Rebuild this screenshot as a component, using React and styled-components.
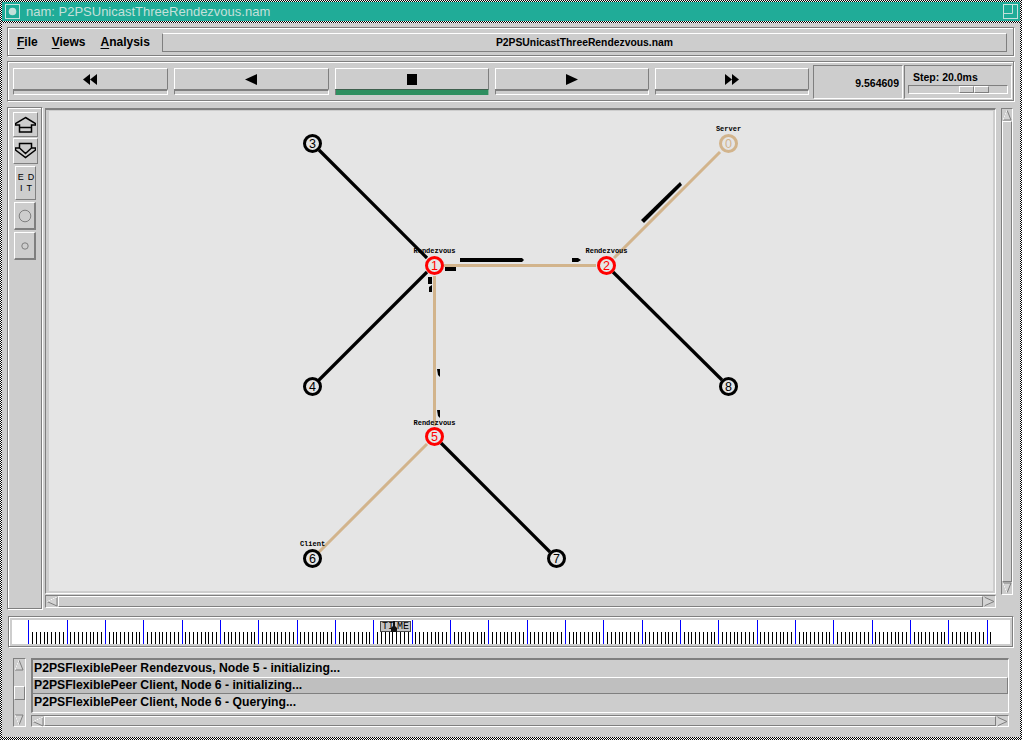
import React from "react";
import styled, { createGlobalStyle, css } from "styled-components";

const Global = createGlobalStyle`
  html, body { margin: 0; padding: 0; background: #cdcdcd; }
  #root { width: 1022px; height: 740px; overflow: hidden; }
`;

const GREY = "#7f7f7f";
const FACE = "#cdcdcd";

const etched = css`
  border: 1px solid ${GREY};
  border-right-color: #ffffff;
  border-bottom-color: #ffffff;
  box-shadow: inset -1px -1px 0 ${GREY}, inset 1px 1px 0 #ffffff;
`;
const raised = css`
  border: 1px solid #ffffff;
  border-right-color: ${GREY};
  border-bottom-color: ${GREY};
`;
const sunken = css`
  border: 1px solid ${GREY};
  border-right-color: #ffffff;
  border-bottom-color: #ffffff;
`;

const Screen = styled.div`
  box-sizing: border-box;
  width: 1022px;
  height: 740px;
  padding: 2px 2px 3px 2px;
  background: repeating-conic-gradient(#000 0 25%, #fff 0 50%) 0 0 / 2px 2px;
  display: flex;
  flex-direction: column;
  font-family: "Liberation Sans", Arial, sans-serif;
`;
const TitleBar = styled.div`
  height: 19px;
  flex: none;
  margin-bottom: 2px;
  background: #20ac98;
  color: #c4e0da;
  display: flex;
  align-items: center;
  padding: 0 2px 0 3px;
  font-size: 13px;
`;
const TitleText = styled.span`
  margin-left: 6px;
  flex: 1;
`;
const Body = styled.div`
  flex: 1;
  background: ${FACE};
  padding: 4px 5px 0 5px;
  display: flex;
  flex-direction: column;
  min-height: 0;
`;
const MenuFrame = styled.div`
  ${etched}
  box-sizing: border-box;
  height: 30px;
  flex: none;
  margin-bottom: 4px;
  display: flex;
  align-items: center;
  padding: 0 7px 0 9px;
`;
const MenuItem = styled.span`
  font-size: 12px;
  font-weight: 700;
  color: #000;
  margin-right: ${p => p.$gap}px;
  u { text-decoration-thickness: 1px; text-underline-offset: 2px; }
`;
const TitleBox = styled.div`
  border: 1px solid #ffffff;
  border-color: #ffffff ${GREY} ${GREY} ${GREY};
  box-sizing: border-box;
  flex: 1;
  height: 19px;
  margin-left: 0;
  font-size: 10.35px;
  font-weight: 700;
  text-align: center;
  line-height: 18px;
`;
const Transport = styled.div`
  ${etched}
  box-sizing: border-box;
  height: 41px;
  flex: none;
  margin-bottom: 5px;
  display: flex;
  padding: 6px 2px 0 5px;
`;
const TransButton = styled.div`
  box-sizing: border-box;
  width: ${p => p.$w}px;
  margin-right: ${p => p.$m}px;
  height: 27px;
  flex: none;
  display: flex;
  flex-direction: column;
`;
const TransFace = styled.div`
  box-sizing: border-box;
  height: 21px;
  flex: none;
  display: flex;
  align-items: center;
  justify-content: center;
  border-style: solid;
  border-width: 1px 1px 0 1px;
  border-color: #fff ${GREY} #fff #fff;
`;
const TransStrip = styled.div`
  flex: 1;
  box-sizing: border-box;
  border-style: solid;
  border-width: 2px 1px 1px 1px;
  border-color: ${p => (p.$on ? "#3d5f4d" : GREY)} #fff #fff ${GREY};
  ${p => p.$on && "border-width: 1px 1px 0 1px; border-right-color: #8fb59f;"}
  background: ${p => (p.$on ? "#2f8f60" : FACE)};
`;
const ReadoutTime = styled.div`
  ${sunken}
  box-sizing: border-box;
  flex: none;
  width: 90px;
  height: 34px;
  margin: -3px 0 0 4px;
  display: flex;
  align-items: center;
  justify-content: flex-end;
  padding: 2px 3px 0 0;
  font-size: 10.5px;
  font-weight: 700;
`;
const StepBox = styled.div`
  ${sunken}
  box-sizing: border-box;
  flex: none;
  width: 108px;
  height: 34px;
  margin: -3px 0 0 1px;
  padding: 4px 3px 0 3px;
  display: flex;
  flex-direction: column;
`;
const StepLabel = styled.div`
  font-size: 10.5px;
  font-weight: 700;
  padding-left: 5px;
  height: 15px;
  line-height: 14px;
`;
const StepTrack = styled.div`
  ${sunken}
  box-sizing: border-box;
  height: 9px;
  display: flex;
  justify-content: flex-end;
  padding-right: 18px;
`;
const StepThumb = styled.div`
  ${raised}
  box-sizing: border-box;
  width: 15px;
  height: 7px;
`;
const MainRow = styled.div`
  flex: none;
  height: 503px;
  display: flex;
  align-items: stretch;
  margin-bottom: 6px;
`;
const ToolPanel = styled.div`
  ${etched}
  box-sizing: border-box;
  width: 36px;
  flex: none;
  display: flex;
  flex-direction: column;
  align-items: center;
  padding-top: 4px;
  margin-right: 2px;
`;
const ToolButton = styled.div`
  box-sizing: border-box;
  width: ${p => p.$w}px;
  height: ${p => p.$h}px;
  margin-bottom: ${p => p.$mb}px;
  flex: none;
  border-style: solid;
  border-width: ${p => (p.$thick ? "1px 2px 2px 1px" : "1px")};
  border-color: #fff ${GREY} ${GREY} #fff;
  display: flex;
  align-items: center;
  justify-content: center;
`;
const EditLabel = styled.div`
  font-size: 9px;
  line-height: 11px;
  letter-spacing: 4px;
  padding-left: 6px;
  text-align: center;
  font-family: "Liberation Sans", sans-serif;
  color: #000;
`;
const CenterCol = styled.div`
  width: 952px;
  flex: none;
  display: flex;
  flex-direction: column;
  padding-top: 1px;
`;
const CanvasFrame = styled.div`
  box-sizing: border-box;
  width: 951px;
  height: 486px;
  flex: none;
  border-style: solid;
  border-width: 2px 1px 1px 1px;
  border-color: ${GREY} #fff #fff ${GREY};
  padding: 1px 2px 2px 3px;
  background: ${FACE};
`;
const Canvas = styled.svg`
  display: block;
  width: 100%;
  height: 100%;
  background: #e5e5e5;
`;
const Scroll = styled.div`
  box-sizing: border-box;
  flex: none;
  display: flex;
  flex-direction: ${p => (p.$v ? "column" : "row")};
  ${sunken}
  background: ${FACE};
`;
const HScrollA = styled(Scroll)`
  height: 13px;
  width: 951px;
  margin-top: 1px;
`;
const VScrollA = styled(Scroll)`
  width: 12px;
  height: 487px;
  margin: 1px 0 0 4px;
`;
const Arrow = styled.svg`
  flex: none;
  display: block;
  width: ${p => (p.$v ? 10 : 12)}px;
  height: ${p => (p.$v ? 12 : 11)}px;
`;
const Thumb = styled.div`
  flex: 1;
  ${raised}
  border-color: #fff ${GREY} ${GREY} #fff;
  min-width: 0;
`;
const Timeline = styled.div`
  ${etched}
  box-sizing: border-box;
  position: relative;
  height: 32px;
  width: 1006px;
  margin-left: 1px;
  flex: none;
  padding: 3px 3px 2px 3px;
  margin-bottom: 10px;
`;
const Ticks = styled.svg`
  display: block;
  width: 998px;
  height: 24px;
  background: #fff;
`;
const TimeMarker = styled.div`
  position: absolute;
  left: 371px;
  top: 4px;
  box-sizing: border-box;
  width: 31px;
  height: 11px;
  border: 1px solid #4a4a4a;
  background: #c4c4c4;
  font-family: "Liberation Mono", monospace;
  font-size: 10px;
  line-height: 9px;
  display: flex;
  justify-content: space-between;
  padding: 0 1px;
  white-space: nowrap;
`;
const MarkerPin = styled.svg`
  position: absolute;
  left: 9px;
  top: -1px;
  width: 8px;
  height: 12px;
`;
const LogArea = styled.div`
  display: flex;
  height: 69px;
  flex: none;
  padding-left: 6px;
`;
const LogV = styled(Scroll)`
  width: 13px;
  height: 69px;
  margin-right: 5px;
`;
const VTrackTop = styled.div`
  height: 12px;
  flex: 1;
`;
const LogThumb = styled.div`
  ${raised}
  height: 12px;
  flex: none;
`;
const LogCol = styled.div`
  width: 978px;
  flex: none;
  display: flex;
  flex-direction: column;
`;
const LogList = styled.div`
  box-sizing: border-box;
  height: 55px;
  flex: none;
  border-style: solid;
  border-width: 2px 1px 1px 2px;
  border-color: ${GREY} #fff #fff ${GREY};
  margin-bottom: 2px;
`;
const LogRow = styled.div`
  box-sizing: border-box;
  height: 17px;
  padding-left: 1px;
  font-size: 12.2px;
  font-weight: 700;
  line-height: 17px;
  white-space: nowrap;
  ${p =>
    p.$sel &&
    css`
      background: #bfbfbf;
      border-top: 1px solid #fff;
      border-bottom: 1px solid ${GREY};
      border-right: 1px solid ${GREY};
      line-height: 15px;
    `}
`;
const LogH = styled(Scroll)`
  height: 12px;
`;

const TriIcon = ({ dir, n }) => {
  const w = n === 2 ? 15 : 13;
  const pts = [];
  if (n === 2) {
    if (dir === "l") pts.push("0,5.5 7,0 7,11", "7,5.5 14,0 14,11");
    else pts.push("0,0 7,5.5 0,11", "7,0 14,5.5 7,11");
  } else if (dir === "l") pts.push("0,5.5 12,0 12,11");
  else pts.push("0,0 12,5.5 0,11");
  return (
    <svg width={w} height="11" viewBox={`0 0 ${w} 11`}>
      {pts.map(p => (
        <polygon key={p} points={p} fill="#000" />
      ))}
    </svg>
  );
};

const ScrollArrow = ({ dir }) => {
  const v = dir === "u" || dir === "d";
  const p = {
    u: ["5,1 9,11 1,11", "5,1 1,11"],
    d: ["1,1 9,1 5,11", "1,1 5,11"],
    l: ["11,1 11,10 1,5.5", "1,5.5 11,1"],
    r: ["1,1 11,5.5 1,10", "1,1 1,10"],
  }[dir];
  return (
    <Arrow $v={v} viewBox={v ? "0 0 10 12" : "0 0 12 11"}>
      <polygon points={p[0]} fill="#d4d4d4" stroke="#7f7f7f" strokeWidth="1" />
      <polyline points={p[1]} fill="none" stroke="#fff" strokeWidth="1" />
    </Arrow>
  );
};

const links = [
  { a: [319, 150], b: [427, 258], c: "#000", w: 3.2 },
  { a: [427, 272], b: [318, 381], c: "#000", w: 3.2 },
  { a: [613, 272], b: [722, 380], c: "#000", w: 3.2 },
  { a: [441, 443], b: [550, 552], c: "#000", w: 3.2 },
  { a: [720, 152], b: [614, 258], c: "#d2b48c", w: 3 },
  { a: [444, 265.5], b: [596, 265.5], c: "#d2b48c", w: 3 },
  { a: [434.5, 276], b: [434.5, 426], c: "#d2b48c", w: 3 },
  { a: [427, 444], b: [319, 552], c: "#d2b48c", w: 3 },
];

const nodes = [
  { id: 3, x: 312.5, y: 143.5, c: "#000" },
  { id: 0, x: 728.5, y: 143.5, c: "#d2b48c", label: "Server", ly: 131 },
  { id: 1, x: 434.5, y: 265.5, c: "#f00", label: "Rendezvous", ly: 253 },
  { id: 2, x: 606.5, y: 265.5, c: "#f00", label: "Rendezvous", ly: 253 },
  { id: 4, x: 312.5, y: 386.5, c: "#000" },
  { id: 8, x: 728.5, y: 386.5, c: "#000" },
  { id: 5, x: 434.5, y: 436.5, c: "#f00", label: "Rendezvous", ly: 425 },
  { id: 6, x: 312.5, y: 558.5, c: "#000", label: "Client", ly: 546 },
  { id: 7, x: 556.5, y: 558.5, c: "#000" },
];

const packets = [
  "641,220 680,182 682,185 644,223",
  "460,258 522,258 524,260 522,262 460,262",
  "572,258 578,258 581,260 578,262 572,262",
  "445,267 456,267 456,271 445,271",
  "428,277 432,277 432,284 428,284",
  "429,287 432,285 432,292 429,292",
  "437,369 440,369 440,377 438,375",
  "437,410 440,410 440,418 438,416",
];

const Network = () => (
  <Canvas viewBox="49 111 944 480">
    {links.map((l, i) => (
      <line key={i} x1={l.a[0]} y1={l.a[1]} x2={l.b[0]} y2={l.b[1]} stroke={l.c} strokeWidth={l.w} />
    ))}
    {packets.map(p => (
      <polygon key={p} points={p} fill="#000" />
    ))}
    {nodes.map(n => (
      <g key={n.id}>
        <circle cx={n.x} cy={n.y} r="8" fill="#e5e5e5" stroke={n.c} strokeWidth="3" />
        <text
          x={n.x}
          y={n.y + 4.5}
          textAnchor="middle"
          fontFamily="Liberation Sans, sans-serif"
          fontSize="12.5"
          fill={n.c}
        >
          {n.id}
        </text>
        {n.label && (
          <text
            x={n.x}
            y={n.ly}
            textAnchor="middle"
            fontFamily="Liberation Mono, monospace"
            fontSize="7"
            fontWeight="700"
            fill="#000"
          >
            {n.label}
          </text>
        )}
      </g>
    ))}
  </Canvas>
);

const TimelineTicks = () => {
  const black = Array.from({ length: 252 }, (_, i) => 16.33 + i * 3.8333);
  const blue = Array.from({ length: 26 }, (_, i) => 16.33 + i * 38.333);
  return (
    <Ticks viewBox="0 0 998 24">
      {black.map((x, i) => (
        <line key={i} x1={Math.round(x) + 0.5} x2={Math.round(x) + 0.5} y1="12" y2="24" stroke="#000" />
      ))}
      {blue.map((x, i) => (
        <line key={i} x1={Math.round(x) + 0.5} x2={Math.round(x) + 0.5} y1="0" y2="24" stroke="#0000ff" />
      ))}
    </Ticks>
  );
};

export default function App() {
  return (
    <>
      <Global />
      <Screen>
        <TitleBar>
          <svg width="15" height="15" viewBox="0 0 15 15">
            <rect x="0.5" y="0.5" width="14" height="14" fill="none" stroke="#c4e0da" />
            <circle cx="7.5" cy="7.5" r="3.8" fill="#c4e0da" />
          </svg>
          <TitleText>nam: P2PSUnicastThreeRendezvous.nam</TitleText>
          <svg width="15" height="15" viewBox="0 0 15 15">
            <rect x="0.5" y="0.5" width="14" height="14" fill="none" stroke="#c4e0da" />
            <path d="M0.5 9.5H9.5V0.5" fill="none" stroke="#c4e0da" />
          </svg>
        </TitleBar>
        <Body>
          <MenuFrame>
            <MenuItem $gap={14}><u>F</u>ile</MenuItem>
            <MenuItem $gap={15}><u>V</u>iews</MenuItem>
            <MenuItem $gap={12}><u>A</u>nalysis</MenuItem>
            <TitleBox>P2PSUnicastThreeRendezvous.nam</TitleBox>
          </MenuFrame>
          <Transport>
            <TransButton $w={155} $m={6}><TransFace><TriIcon dir="l" n={2} /></TransFace><TransStrip /></TransButton>
            <TransButton $w={155} $m={6}><TransFace><TriIcon dir="l" n={1} /></TransFace><TransStrip /></TransButton>
            <TransButton $w={154} $m={6}>
              <TransFace>
                <svg width="10" height="11"><rect width="10" height="11" fill="#000" /></svg>
              </TransFace>
              <TransStrip $on />
            </TransButton>
            <TransButton $w={154} $m={6}><TransFace><TriIcon dir="r" n={1} /></TransFace><TransStrip /></TransButton>
            <TransButton $w={154} $m={0}><TransFace><TriIcon dir="r" n={2} /></TransFace><TransStrip /></TransButton>
            <ReadoutTime>9.564609</ReadoutTime>
            <StepBox>
              <StepLabel>Step: 20.0ms</StepLabel>
              <StepTrack>
                <StepThumb />
                <StepThumb />
              </StepTrack>
            </StepBox>
          </Transport>
          <MainRow>
            <ToolPanel>
              <ToolButton $w={25} $h={25} $mb={1}>
                <svg width="21" height="19" viewBox="0 0 21 19">
                  <path d="M10.5 2.5L20.5 8.5V10H16.5V17H4.5V10H0.5V8.5Z M4.5 12.5H16.5" fill="none" stroke="#000" strokeWidth="1.5" />
                </svg>
              </ToolButton>
              <ToolButton $w={25} $h={26} $mb={2}>
                <svg width="21" height="19" viewBox="0 0 21 19">
                  <path d="M4.5 1.5H16.5V6H20.5V8L10.5 15.5L0.5 8V6H4.5Z M4.5 6L10.5 11.5L16.5 6" fill="none" stroke="#000" strokeWidth="1.5" />
                </svg>
              </ToolButton>
              <ToolButton $w={21} $h={34} $mb={2}>
                <EditLabel>ED<br />IT</EditLabel>
              </ToolButton>
              <ToolButton $w={22} $h={28} $mb={2} $thick>
                <svg width="14" height="14"><circle cx="7" cy="7" r="5.8" fill="none" stroke="#7f7f7f" /></svg>
              </ToolButton>
              <ToolButton $w={22} $h={28} $mb={0} $thick>
                <svg width="10" height="10"><circle cx="5" cy="5" r="3.2" fill="none" stroke="#7f7f7f" /></svg>
              </ToolButton>
            </ToolPanel>
            <CenterCol>
              <CanvasFrame>
                <Network />
              </CanvasFrame>
              <HScrollA>
                <ScrollArrow dir="l" />
                <Thumb />
                <ScrollArrow dir="r" />
              </HScrollA>
            </CenterCol>
            <VScrollA $v>
              <ScrollArrow dir="u" />
              <Thumb />
              <ScrollArrow dir="d" />
            </VScrollA>
          </MainRow>
          <Timeline>
            <TimelineTicks />
            <TimeMarker>
              <span>TI</span>
              <span>ME</span>
              <MarkerPin viewBox="0 0 8 12">
                <polygon points="3,0 5,0 5,5 7,7 7,11 1,11 1,7 3,5" fill="#111" />
              </MarkerPin>
            </TimeMarker>
          </Timeline>
          <LogArea>
            <LogV $v>
              <ScrollArrow dir="u" />
              <VTrackTop />
              <LogThumb />
              <VTrackTop />
              <ScrollArrow dir="d" />
            </LogV>
            <LogCol>
              <LogList>
                <LogRow>P2PSFlexiblePeer Rendezvous, Node 5 - initializing...</LogRow>
                <LogRow $sel>P2PSFlexiblePeer Client, Node 6 - initializing...</LogRow>
                <LogRow>P2PSFlexiblePeer Client, Node 6 - Querying...</LogRow>
              </LogList>
              <LogH>
                <ScrollArrow dir="l" />
                <Thumb />
                <ScrollArrow dir="r" />
              </LogH>
            </LogCol>
          </LogArea>
        </Body>
      </Screen>
    </>
  );
}
